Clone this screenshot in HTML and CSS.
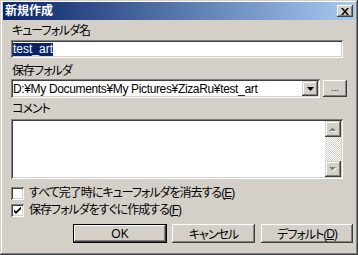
FILE: index.html
```html
<!DOCTYPE html>
<html lang="ja">
<head>
    <meta charset="UTF-8">
    <title>新規作成</title>
    <link rel="stylesheet" href="styles.css">
</head>
<body>
    <div class="window">
        <div class="titlebar">
            <span class="title">新規作成</span>
            <span class="close-btn">
                <svg width="8" height="7" viewBox="0 0 8 7"><path d="M0 0h2l2 2.5L6 0h2L5 3.5 8 7H6L4 4.5 2 7H0l3-3.5z" fill="#000"/></svg>
            </span>
        </div>
        <div class="content">
            <div class="label label-first">キューフォルダ名</div>
            <div class="field text-field"><span class="selected">test_art</span></div>

            <div class="label label-second">保存フォルダ</div>
            <div class="combo-row">
                <div class="field combo">
                    <span class="value">D:¥My Documents¥My Pictures¥ZizaRu¥test_art</span>
                    <span class="drop-btn">
                        <svg width="7" height="4" viewBox="0 0 7 4"><path d="M0 0h7L3.5 4z" fill="#000"/></svg>
                    </span>
                </div>
                <div class="btn browse-btn">...</div>
            </div>

            <div class="label label-third">コメント</div>
            <div class="field memo">
                <div class="scrollbar">
                    <span class="sb-btn">
                        <svg width="8" height="5" viewBox="0 0 8 5"><path d="M1 5h7L4.5 1.5z" fill="#fff"/><path d="M0 4h7L3.5 0.5z" fill="#808080"/></svg>
                    </span>
                    <span class="sb-track"></span>
                    <span class="sb-btn">
                        <svg width="8" height="5" viewBox="0 0 8 5"><path d="M1 1h7L4.5 4.5z" fill="#fff"/><path d="M0 0h7L3.5 3.5z" fill="#808080"/></svg>
                    </span>
                </div>
            </div>

            <div class="check-row check-first">
                <span class="checkbox"></span>
                <span class="check-text">すべて完了時にキューフォルダを消去する(<u>E</u>)</span>
            </div>
            <div class="check-row check-second">
                <span class="checkbox">
                    <svg width="7" height="7" viewBox="0 0 7 7"><path d="M0 2.5l2 2 5-5v2.5l-5 5-2-2z" fill="#000"/></svg>
                </span>
                <span class="check-text">保存フォルダをすぐに作成する(<u>F</u>)</span>
            </div>

            <div class="buttons">
                <div class="btn btn-ok">OK</div>
                <div class="btn btn-cancel">キャンセル</div>
                <div class="btn btn-default">デフォルト(<u>D</u>)</div>
            </div>
        </div>
    </div>
</body>
</html>
```

FILE: styles.css
```css
*{
    margin: 0;
    padding: 0;
    box-sizing: border-box;
}
body{
    background: #d4d0c8;
    font-family: "Liberation Sans", "Noto Sans CJK JP", sans-serif;
    font-size: 12px;
    font-feature-settings: "palt";
    color: #000;
}
.window{
    width: 358px;
    height: 255px;
    background: #d4d0c8;
    padding: 2px 3px 3px 3px;
    box-shadow: inset -1px -1px #404040, inset 1px 1px #d4d0c8, inset -2px -2px #808080, inset 2px 2px #fff;
}
.titlebar{
    height: 18px;
    background: linear-gradient(to right, #0a246a, #a6caf0);
    display: flex;
    align-items: center;
    justify-content: space-between;
    padding: 0 2px 0 2px;
}
.title{
    color: #fff;
    font-weight: bold;
    font-size: 12px;
    line-height: 18px;
}
.close-btn{
    width: 16px;
    height: 12px;
    background: #d4d0c8;
    box-shadow: inset -1px -1px #404040, inset 1px 1px #fff, inset -2px -2px #808080;
    display: flex;
    align-items: center;
    justify-content: center;
}
.content{
    padding-left: 8px;
    display: flex;
    flex-direction: column;
}
.label, .check-text, .btn-cancel, .btn-default{
    letter-spacing: -1px;
}
.label{
    padding-left: 1px;
    line-height: 15px;
}
.label-first{
    margin-top: 4px;
    height: 16px;
}
.label-second{
    margin-top: 6px;
    height: 15px;
}
.label-third{
    margin-top: 4px;
    height: 17px;
}
.field{
    background: #fff;
    box-shadow: inset 1px 1px #808080, inset -1px -1px #fff, inset 2px 2px #404040, inset -2px -2px #d4d0c8;
}
.text-field{
    width: 332px;
    height: 18px;
    padding-left: 2px;
    display: flex;
    align-items: center;
}
.selected{
    background: #0a246a;
    color: #fff;
    line-height: 13px;
}
.combo-row{
    display: flex;
    align-items: flex-start;
}
.combo{
    width: 309px;
    height: 19px;
    padding: 2px;
    display: flex;
    align-items: center;
}
.combo .value{
    flex: 1;
    white-space: nowrap;
    overflow: hidden;
    letter-spacing: -0.35px;
}
.drop-btn{
    width: 16px;
    height: 15px;
    background: #d4d0c8;
    box-shadow: inset -1px -1px #404040, inset 1px 1px #d4d0c8, inset -2px -2px #808080, inset 2px 2px #fff;
    display: flex;
    align-items: center;
    justify-content: center;
}
.btn{
    background: #d4d0c8;
    box-shadow: inset -1px -1px #404040, inset 1px 1px #fff, inset -2px -2px #808080, inset 2px 2px #d4d0c8;
    display: flex;
    align-items: center;
    justify-content: center;
}
.browse-btn{
    width: 24px;
    height: 17px;
    margin: 1px 0 0 3px;
    font-size: 9px;
    padding-bottom: 1px;
}
.memo{
    width: 332px;
    height: 60px;
    padding: 2px;
    display: flex;
    justify-content: flex-end;
}
.scrollbar{
    width: 16px;
    display: flex;
    flex-direction: column;
}
.sb-btn{
    width: 16px;
    height: 16px;
    background: #d4d0c8;
    box-shadow: inset -1px -1px #404040, inset 1px 1px #d4d0c8, inset -2px -2px #808080, inset 2px 2px #fff;
    display: flex;
    align-items: center;
    justify-content: center;
}
.sb-track{
    flex: 1;
    background-color: #fff;
    background-image: conic-gradient(#d4d0c8 25%, #fff 0 50%, #d4d0c8 0 75%, #fff 0);
    background-size: 2px 2px;
}
.check-row{
    display: flex;
    align-items: center;
    height: 13px;
}
.check-first{
    margin-top: 8px;
}
.check-second{
    margin-top: 4px;
}
.checkbox{
    width: 13px;
    height: 13px;
    background: #fff;
    box-shadow: inset 1px 1px #808080, inset -1px -1px #fff, inset 2px 2px #404040, inset -2px -2px #d4d0c8;
    display: flex;
    align-items: center;
    justify-content: center;
    margin-right: 5px;
}
.check-text{
    line-height: 13px;
    white-space: nowrap;
}
.buttons{
    display: flex;
    margin-top: 7px;
    padding-left: 62px;
}
.buttons .btn{
    height: 19px;
}
.btn-ok{
    width: 94px;
    box-shadow: inset 0 0 0 1px #000, inset -2px -2px #404040, inset 2px 2px #fff, inset -3px -3px #808080;
}
.btn-cancel{
    width: 83px;
    margin-left: 5px;
}
.btn-default{
    width: 92px;
    margin-left: 6px;
}
```
